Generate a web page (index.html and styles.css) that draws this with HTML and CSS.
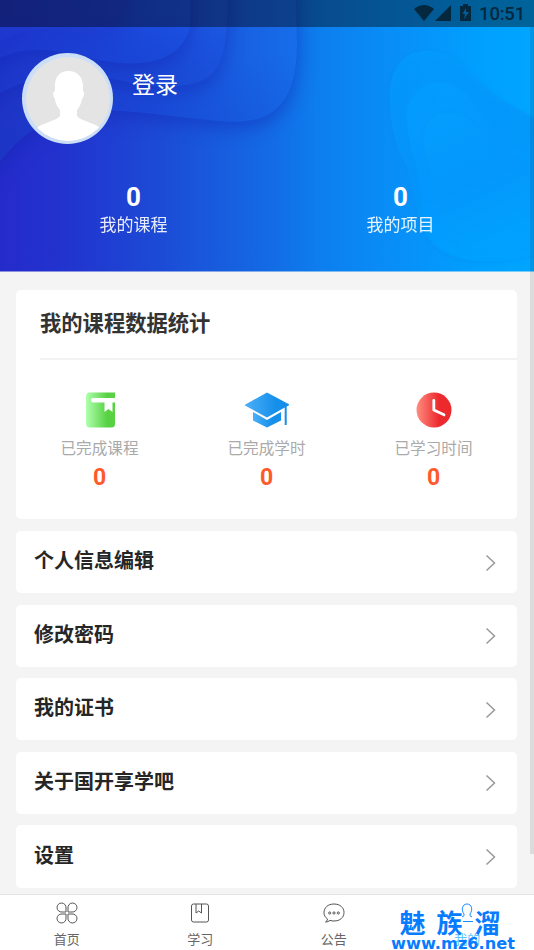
FILE: index.html
```html
<!DOCTYPE html>
<html lang="zh-CN">
<head>
<meta charset="utf-8">
<title>我的</title>
<link rel="stylesheet" href="styles.css">
</head>
<body>
<div class="screen">
  <header class="hero">
    <svg class="hero-art" viewBox="0 0 534 272" preserveAspectRatio="none" aria-hidden="true">
      <defs>
        <linearGradient id="bg"><stop offset="0" stop-color="#252bcb"/><stop offset=".12" stop-color="#2233ce"/><stop offset=".3" stop-color="#1c4bd6"/><stop offset=".5" stop-color="#146ae4"/><stop offset=".6" stop-color="#0d7eee"/><stop offset=".75" stop-color="#0890f8"/><stop offset=".9" stop-color="#00a0ff"/><stop offset="1" stop-color="#00a6ff"/></linearGradient>
        <linearGradient id="w1"><stop offset="0" stop-color="#2133c5"/><stop offset=".5" stop-color="#1c49d8"/><stop offset="1" stop-color="#166de9"/></linearGradient>
        <linearGradient id="w2"><stop offset="0" stop-color="#2135cc"/><stop offset="1" stop-color="#1b58e1"/></linearGradient>
        <linearGradient id="w3"><stop offset="0" stop-color="#2136cf"/><stop offset="1" stop-color="#1b53e3"/></linearGradient>
        <linearGradient id="fade" x2="0" y2="1"><stop offset=".35" stop-color="#0b24b5" stop-opacity="0"/><stop offset="1" stop-color="#1133bd" stop-opacity=".28"/></linearGradient>
        <linearGradient id="blob" x1=".1" y1="0" x2=".5" y2="1"><stop offset="0" stop-color="#049eff"/><stop offset=".55" stop-color="#0497fc"/><stop offset="1" stop-color="#00a2ff"/></linearGradient>
        <filter id="deep" x="-30%" y="-40%" width="160%" height="200%" color-interpolation-filters="sRGB"><feDropShadow dx="1" dy="7" stdDeviation="9" flood-color="#1226b4" flood-opacity=".45"/></filter>
        <filter id="soft" x="-30%" y="-30%" width="160%" height="160%" color-interpolation-filters="sRGB"><feDropShadow dx="0" dy="1" stdDeviation="2" flood-color="#0879df" flood-opacity=".28"/></filter>
      </defs>
      <rect width="534" height="272" fill="url(#bg)"/>
      <g filter="url(#deep)">
        <path d="M-20 194C0 155 32 119 80 111C133 108 177 119 229 122C284 124 297 91 297 42L295-20H-20Z" fill="url(#w1)"/>
        <path d="M-20 194C0 155 32 119 80 111C133 108 177 119 229 122C284 124 297 91 297 42L295-20H-20Z" fill="url(#fade)"/>
      </g>
      <g filter="url(#deep)">
        <path d="M-20 107C18 76 67 70 111 79C148 87 184 91 206 79C224 69 229 42 227-20H-20Z" fill="url(#w2)"/>
        <path d="M-20 107C18 76 67 70 111 79C148 87 184 91 206 79C224 69 229 42 227-20H-20Z" fill="url(#fade)"/>
      </g>
      <g filter="url(#deep)">
        <path d="M-20 72C17 39 56 50 104 61C145 68 181 61 190 28L191-20H-20Z" fill="url(#w3)"/>
        <path d="M-20 72C17 39 56 50 104 61C145 68 181 61 190 28L191-20H-20Z" fill="url(#fade)"/>
      </g>
      <path filter="url(#deep)" d="M-20 62C12 18 59 30 91 34Q128 36 131-20H-20Z" fill="#2037cc" opacity=".4"/>
      <g filter="url(#soft)" fill="url(#blob)">
        <path d="M390 102C388 72 401 52 425 51C448 50 467 67 480 81C501 103 515 105 544 125V250C501 270 448 264 426 235C414 218 414 177 402 157C395 143 390 124 390 102Z" opacity=".65"/>
        <path d="M407 120C405 100 421 82 440 82C460 82 477 104 491 124C505 143 525 145 544 155V253C506 265 455 268 433 245C420 226 422 184 414 157C410 145 407 131 407 120Z" opacity=".7"/>
        <path d="M424 141C423 125 434 113 449 113C466 113 478 126 489 144C507 161 524 160 544 169V242C513 253 479 256 457 243C441 233 439 205 432 176C429 162 424 153 424 141Z" opacity=".75"/>
      </g>
    </svg>
    <div class="status">
      <svg class="status-icons" viewBox="0 0 60 20" aria-hidden="true">
        <path d="M0 6Q10-2 20 6L10 18Z"/><path d="M37 2V18H21Z"/><path d="M46 3H49V1H54V3H57V18H46ZM52 5L48.500 11H51L50 16L55 9H52Z" fill-rule="evenodd"/>
      </svg>
      <span class="time">10:51</span>
    </div>
    <div class="profile">
      <div class="avatar">
        <svg viewBox="0 0 84 84" aria-hidden="true"><rect width="84" height="84" fill="#e4e4e4"/><path d="M42.500 14C51 14 57 20 57 29V34C59 35 58 40 56 42C55 47 54 49 51 53V59C55 64 66 65 73 70Q76 74 74 84H10Q8 74 12 70C19 65 30 64 34 59V53C31 49 29 46 29 42C27 39 26 35 29 34V28C29 20 34 14 42.500 14Z" fill="#fff"/></svg>
      </div>
      <span class="login">登录</span>
    </div>
    <div class="totals">
      <div class="total"><b>0</b><span>我的课程</span></div>
      <div class="total"><b>0</b><span>我的项目</span></div>
    </div>
  </header>

  <main class="content">
    <section class="stats card">
      <h2>我的课程数据统计</h2>
      <div class="stat-row">
        <div class="stat">
          <svg viewBox="0 0 46 36" aria-hidden="true"><defs><linearGradient id="green"><stop offset="0" stop-color="#b0ffae"/><stop offset=".72" stop-color="#58d244"/></linearGradient></defs><path d="M12.500.5H38V6H16.500Q14 6 14 8.200T16.500 10.500H27.500V20L31.500 17L35.500 20V10.500H38V32Q38 35.500 34.500 35.500H13Q9 35.500 9 31.500V4.500Q9 .5 12.500.5Z" fill="url(#green)"/></svg>
          <span>已完成课程</span><b>0</b>
        </div>
        <div class="stat">
          <svg viewBox="0 0 46 36" aria-hidden="true"><defs><linearGradient id="blue"><stop offset="0" stop-color="#4caff7"/><stop offset=".7" stop-color="#168fea"/></linearGradient></defs><path d="M1 12.700L23 .5L45 12.300V13.300L42.700 14.500V33H40.700V15.500L23 25.500L1 13.500Z" fill="url(#blue)"/><path d="M9 20L23 28L37 20V28.500L23 35.500L9 28.500Z" fill="url(#blue)"/></svg>
          <span>已完成学时</span><b>0</b>
        </div>
        <div class="stat">
          <svg viewBox="0 0 46 36" aria-hidden="true"><defs><linearGradient id="red"><stop offset="0" stop-color="#ff8d7f"/><stop offset=".65" stop-color="#ec292d"/></linearGradient></defs><circle cx="23" cy="18" r="17.500" fill="url(#red)"/><path d="M22.800 8.500V18L33 22.800" fill="none" stroke="#fff" stroke-width="2.800" stroke-linecap="round" stroke-linejoin="round"/></svg>
          <span>已学习时间</span><b>0</b>
        </div>
      </div>
    </section>
    <nav class="menu">
      <a class="card item">个人信息编辑<svg viewBox="0 0 10 18"><path d="M1 1.500L9 9L1 16.500"/></svg></a>
      <a class="card item">修改密码<svg viewBox="0 0 10 18"><path d="M1 1.500L9 9L1 16.500"/></svg></a>
      <a class="card item">我的证书<svg viewBox="0 0 10 18"><path d="M1 1.500L9 9L1 16.500"/></svg></a>
      <a class="card item">关于国开享学吧<svg viewBox="0 0 10 18"><path d="M1 1.500L9 9L1 16.500"/></svg></a>
      <a class="card item">设置<svg viewBox="0 0 10 18"><path d="M1 1.500L9 9L1 16.500"/></svg></a>
    </nav>
  </main>

  <footer class="tabs">
    <a class="tab"><svg viewBox="0 0 22 22"><path d="M10 10H6A4.500 4.500 0 1 1 10 6ZM12 10V6A4.500 4.500 0 1 1 16 10ZM10 12V16A4.500 4.500 0 1 1 6 12ZM12 12H16A4.500 4.500 0 1 1 12 16Z"/></svg><span>首页</span></a>
    <a class="tab"><svg viewBox="0 0 22 22"><rect x="2.500" y="2" width="17" height="18" rx="2"/><path d="M7 2V11L9.700 9L12.500 11V2"/></svg><span>学习</span></a>
    <a class="tab"><svg viewBox="0 0 22 22"><path d="M4.500 17C2.500 15.500 1 13.500 1 10.800C1 5.500 5 2 11 2S21 5.500 21 10.500S17 19 11 19Q9 19 7 18.400Q5 20 2.500 20Q4.500 19 4.500 17Z"/><circle cx="6.700" cy="11" r="1.100"/><circle cx="11" cy="11" r="1.100"/><circle cx="15.300" cy="11" r="1.100"/></svg><span>公告</span></a>
    <a class="tab active"><svg viewBox="0 0 22 22"><path d="M8 12C5 8 6 2 11 2S17 8 14 12Q13 14 16 15M8 12Q9 14 6 15M7 19.500H17"/></svg><span>我的</span></a>
  </footer>

  <div class="scrollbar"></div>
  <svg class="watermark" viewBox="0 0 134 50">
    <text class="wm-cn" x="9.500" y="31.500">魅</text><text class="wm-cn" x="46.500" y="31.500">族</text><text class="wm-cn" x="84.500" y="31.500">溜</text>
    <text class="wm-url" x="1" y="47.500" textLength="124" lengthAdjust="spacingAndGlyphs">www.mz6.net</text>
  </svg>
</div>
</body>
</html>
```
FILE: styles.css
```css
* { box-sizing: border-box; }
body {
  margin: 0;
  background: #f4f4f4;
  font-family: Roboto, "Noto Sans CJK SC", sans-serif;
  overflow: hidden;
}
svg { display: block; flex: none; }
.screen {
  position: relative;
  width: 534px;
  height: 950px;
  display: flex;
  flex-direction: column;
  overflow: hidden;
}
.hero {
  position: relative;
  flex: none;
  height: 271.5px;
  color: #fff;
  overflow: hidden;
}
.hero-art { position: absolute; inset: 0; width: 100%; height: 100%; }
.status {
  position: relative;
  height: 27px;
  padding-right: 9px;
  display: flex;
  align-items: center;
  justify-content: flex-end;
  gap: 5px;
  background: rgba(0, 0, 0, .4);
  color: #06283f;
}
.status-icons { width: 60px; height: 20px; fill: #06283f; margin-bottom: 1px; }
.time { font-size: 18.5px; font-weight: 500; line-height: 27px; padding-top: 1px; letter-spacing: -.2px; }
.profile {
  position: relative;
  display: flex;
  gap: 19px;
  padding: 26px 0 0 22px;
}
.avatar {
  width: 91px;
  height: 91px;
  padding: 3.5px;
  border-radius: 50%;
  background: #cbdef6;
}
.avatar svg { width: 84px; height: 84px; border-radius: 50%; }
.login { font-size: 23px; line-height: 34px; margin-top: 16px; }
.totals {
  position: relative;
  display: flex;
  padding-top: 38px;
}
.total {
  flex: 1;
  display: flex;
  flex-direction: column;
  align-items: center;
}
.total b { font-size: 26px; line-height: 31px; }
.total span { font-size: 17px; line-height: 25px; opacity: .9; }
.content { flex: 1; padding: 18px 17px 0 16px; }
.card { background: #fff; border-radius: 5px; }
.stats { height: 229.5px; padding-left: 24px; }
.stats h2 {
  margin: 0;
  height: 70px;
  border-bottom: 2px solid #f2f2f2;
  color: #333;
  font-size: 21.3px;
  line-height: 68px;
  font-weight: 700;
}
.stat-row {
  display: grid;
  grid-template-columns: repeat(3, 1fr);
  margin-left: -24px;
  padding-top: 32px;
}
.stat { display: flex; flex-direction: column; align-items: center; }
.stat svg { width: 46px; height: 36px; }
.stat span { margin-top: 9px; font-size: 15.6px; line-height: 24px; color: #aaa; }
.stat b { margin-top: 2px; font-size: 23px; line-height: 29px; color: #ff5a2b; }
.menu {
  display: flex;
  flex-direction: column;
  gap: 11.3px;
  margin-top: 12px;
}
.item {
  height: 62.3px;
  padding: 0 21px 5px 18px;
  display: flex;
  align-items: center;
  justify-content: space-between;
  color: #262626;
  font-size: 20px;
  font-weight: 700;
}
.item svg { width: 11px; height: 18px; margin-top: 6px; fill: none; stroke: #999; stroke-width: 1.5; }
.tabs {
  flex: none;
  height: 56.5px;
  display: flex;
  border-top: 1.5px solid #e5e5e5;
  background: #fff;
}
.tab {
  flex: 1;
  display: flex;
  flex-direction: column;
  align-items: center;
  padding-top: 7px;
  color: #666;
  font-size: 13px;
}
.tab svg { width: 22px; height: 22px; fill: none; stroke: #555; stroke-width: 1; }
.tab span { line-height: 20px; margin-top: 6px; }
.tab.active { color: #5cc4ff; }
.tab.active svg { stroke: #168cff; }
.scrollbar {
  position: absolute;
  right: 0;
  top: 27px;
  width: 4.5px;
  height: 827px;
  background: rgba(0, 0, 0, .1);
}
.watermark {
  position: absolute;
  left: 390px;
  top: 901px;
  width: 134px;
  height: 50px;
  fill: #087cff;
}
.wm-cn { font: 700 26px "Noto Sans CJK SC", sans-serif; }
.wm-url { font: 700 15.5px "DejaVu Sans", sans-serif; }
```
